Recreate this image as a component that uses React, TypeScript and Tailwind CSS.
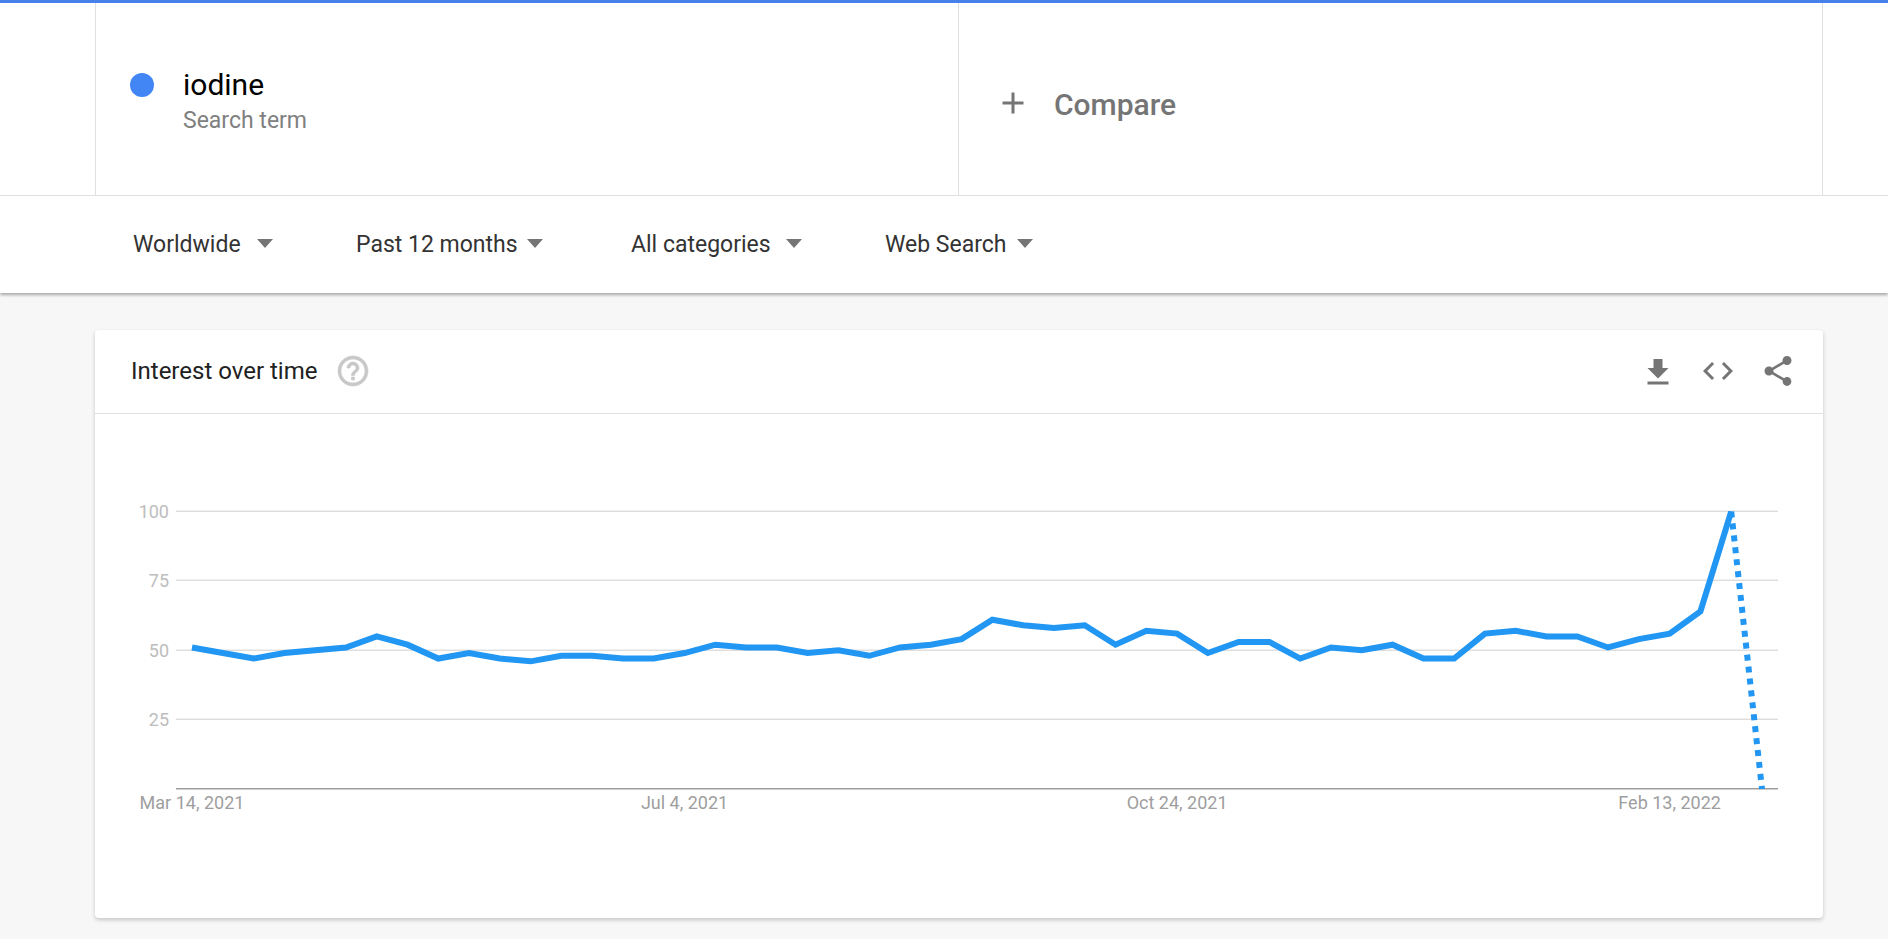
import { useState } from 'react';

interface Filter {
  id: string;
  label: string;
  options: string[];
  className: string;
}

const FILTERS: Filter[] = [
  {
    id: 'region',
    label: 'Region',
    options: ['Worldwide', 'United States', 'United Kingdom'],
    className: 'w-[140px] mr-[83px]',
  },
  {
    id: 'period',
    label: 'Period',
    options: ['Past 12 months', 'Past 90 days', 'Past 5 years'],
    className: 'w-[187px] mr-[88px]',
  },
  {
    id: 'category',
    label: 'Category',
    options: ['All categories', 'Health', 'Science'],
    className: 'w-[171px] mr-[83px]',
  },
  {
    id: 'property',
    label: 'Search type',
    options: ['Web Search', 'Image Search', 'News Search'],
    className: 'w-[148px]',
  },
];

// weekly values, the last one is still partial
const VALUES = [
  51, 49, 47, 49, 50, 51, 55, 52, 47, 49, 47, 46, 48, 48, 47, 47, 49, 52, 51, 51, 49, 50, 48, 51,
  52, 54, 61, 59, 58, 59, 52, 57, 56, 49, 53, 53, 47, 51, 50, 52, 47, 47, 56, 57, 55, 55, 51, 54,
  56, 64, 100, 0,
];

const DATE_LABELS = [
  { index: 0, text: 'Mar 14, 2021' },
  { index: 16, text: 'Jul 4, 2021' },
  { index: 32, text: 'Oct 24, 2021' },
  { index: 48, text: 'Feb 13, 2022' },
];

const GRID = [
  { value: 100, y: 97 },
  { value: 75, y: 166 },
  { value: 50, y: 236 },
  { value: 25, y: 305 },
];

const BASELINE = 375;

const xAt = (i: number) => 97 + (i * 1570) / (VALUES.length - 1);
const yAt = (v: number) => BASELINE - v * 2.775;

function Icon({ d, viewBox = '0 0 24 24' }: { d: string; viewBox?: string }) {
  return (
    <svg viewBox={viewBox} className="size-9 shrink-0" fill="currentColor" aria-hidden="true">
      <path d={d} />
    </svg>
  );
}

function FilterSelect({ filter }: { filter: Filter }) {
  const [value, setValue] = useState(filter.options[0]);

  return (
    <div className={`grid shrink-0 items-center ${filter.className}`}>
      <select
        id={filter.id}
        aria-label={filter.label}
        value={value}
        onChange={(e) => setValue(e.target.value)}
        className="col-start-1 row-start-1 w-full cursor-pointer appearance-none bg-transparent pt-1 text-[23px] text-[#333333] focus:outline-none"
      >
        {filter.options.map((option) => (
          <option key={option}>{option}</option>
        ))}
      </select>
      <svg
        viewBox="0 0 16 9"
        className="pointer-events-none col-start-1 row-start-1 h-[9px] w-4 justify-self-end"
        fill="#757575"
        aria-hidden="true"
      >
        <path d="M0 0h16L8 9z" />
      </svg>
    </div>
  );
}

function InterestChart() {
  const line = VALUES.slice(0, -1).map((v, i) => `${xAt(i)},${yAt(v)}`).join(' ');
  const last = VALUES.length - 1;

  return (
    <svg viewBox="0 0 1728 504" className="block w-full" role="img" aria-label="Interest over time">
      <clipPath id="plot">
        <rect x="81" y="97" width="1602" height="279" />
      </clipPath>
      {GRID.map(({ value, y }) => (
        <g key={value}>
          <rect x="81" y={y - 1} width="1602" height="1" fill="#f0f0f0" />
          <rect x="81" y={y} width="1602" height="1" fill="#dedede" />
          <text x="74" y={y + 7} textAnchor="end" className="text-lg" fill="#bdbdbd">
            {value}
          </text>
        </g>
      ))}
      <rect x="81" y="374" width="1602" height="1" fill="#9e9e9e" />
      <rect x="81" y="375" width="1602" height="1" fill="#cfcfcf" />
      <g clipPath="url(#plot)" fill="none" stroke="#2196f3" strokeWidth="6">
        <polyline points={line} />
        <line
          x1={xAt(last - 1)}
          y1={yAt(VALUES[last - 1])}
          x2={xAt(last)}
          y2={yAt(VALUES[last])}
          strokeDasharray="6 6"
        />
      </g>
      {DATE_LABELS.map(({ index, text }) => (
        <text
          key={text}
          x={xAt(index)}
          y="395"
          textAnchor="middle"
          className="text-lg"
          fill="#9e9e9e"
        >
          {text}
        </text>
      ))}
    </svg>
  );
}

export default function App() {
  return (
    <div className="min-h-screen bg-[#f7f7f7] pb-5 font-['Roboto',sans-serif]">
      <header className="border-t-3 border-[#4680ea] bg-white shadow-[0_2px_3px_rgba(0,0,0,0.32)]">
        <div className="border-b border-[#e0e0e0] pr-[65px] pl-[95px]">
          <div className="grid h-48 grid-cols-2 border-x border-[#e0e0e0]">
            <div className="flex items-center border-r border-[#e0e0e0] pt-2 pl-[34px]">
              <div className="flex gap-[29px]">
                <span className="mt-1.5 size-6 rounded-full bg-[#4285f4]" />
                <div>
                  <p className="text-3xl/9 text-black">iodine</p>
                  <p className="text-[23px]/9 text-[#808080]">Search term</p>
                </div>
              </div>
            </div>
            <button className="flex cursor-pointer items-center gap-[23px] pt-2 pl-9 text-[#757575]">
              <Icon d="M19 13h-6v6h-2v-6H5v-2h6V5h2v6h6v2z" />
              <span className="pt-1 text-3xl/9 font-medium">Compare</span>
            </button>
          </div>
        </div>
        <div className="flex h-[97px] items-center pb-0.5 pl-[133px]">
          {FILTERS.map((filter) => (
            <FilterSelect key={filter.id} filter={filter} />
          ))}
        </div>
      </header>

      <main className="pt-[37px] pr-[65px] pl-[95px]">
        <section className="rounded-sm bg-white shadow-[0_2px_4px_rgba(0,0,0,0.2)]">
          <div className="flex h-21 items-center border-b border-[#e0e0e0] pr-[27px] pb-0.5 pl-9">
            <h2 className="text-2xl text-[#212121]">Interest over time</h2>
            <button
              aria-label="Help"
              className="ml-[18px] cursor-pointer stroke-current stroke-[0.4] text-[#c8c8c8]"
            >
              <Icon d="M11 18h2v-2h-2v2zm1-16C6.48 2 2 6.48 2 12s4.48 10 10 10 10-4.48 10-10S17.52 2 12 2zm0 18c-4.41 0-8-3.59-8-8s3.59-8 8-8 8 3.59 8 8-3.59 8-8 8zm0-14c-2.21 0-4 1.79-4 4h2c0-1.1.9-2 2-2s2 .9 2 2c0 2-3 1.75-3 5h2c0-2.25 3-2.5 3-5 0-2.21-1.79-4-4-4z" />
            </button>
            <div className="ml-auto flex gap-6 text-[#757575]">
              <button aria-label="Download" className="cursor-pointer">
                <Icon viewBox="0 -1 24 24" d="M19 9h-4V3H9v6H5l7 7 7-7zM5 18v2h14v-2H5z" />
              </button>
              <button aria-label="Embed" className="cursor-pointer">
                <Icon d="M9.4 16.6L4.8 12l4.6-4.6L8 6l-6 6 6 6 1.4-1.4zm5.2 0l4.6-4.6-4.6-4.6L16 6l6 6-6 6-1.4-1.4z" />
              </button>
              <button aria-label="Share" className="cursor-pointer">
                <Icon d="M18 16.08c-.76 0-1.44.3-1.96.77L8.91 12.7c.05-.23.09-.46.09-.7s-.04-.47-.09-.7l7.05-4.11c.54.5 1.25.81 2.04.81 1.66 0 3-1.34 3-3s-1.34-3-3-3-3 1.34-3 3c0 .24.04.47.09.7L8.04 9.81C7.5 9.31 6.79 9 6 9c-1.66 0-3 1.34-3 3s1.34 3 3 3c.79 0 1.5-.31 2.04-.81l7.12 4.16c-.05.21-.08.43-.08.65 0 1.61 1.31 2.92 2.92 2.92 1.61 0 2.92-1.31 2.92-2.92s-1.31-2.92-2.92-2.92z" />
              </button>
            </div>
          </div>
          <InterestChart />
        </section>
      </main>
    </div>
  );
}
